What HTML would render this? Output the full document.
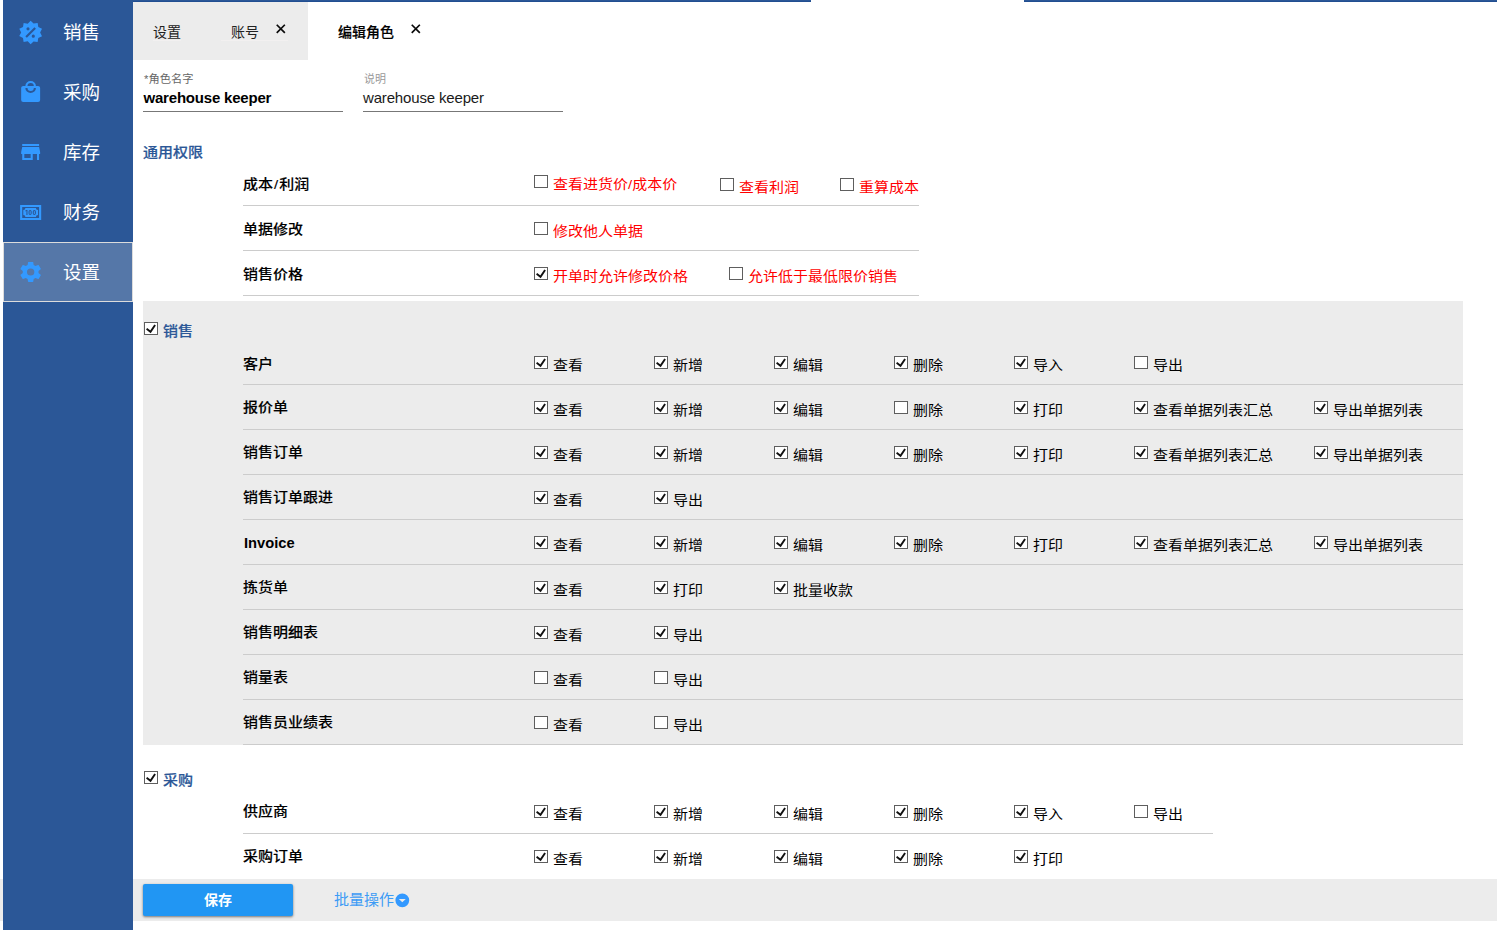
<!DOCTYPE html><html lang="zh-CN"><head><meta charset="utf-8"><title>编辑角色</title><style>
*{margin:0;padding:0;box-sizing:border-box}
html,body{width:1497px;height:930px;overflow:hidden;background:#fff}
body{position:relative;font-family:"Liberation Sans","Noto Sans CJK SC",sans-serif;font-size:15px;color:#000;line-height:20px}
.abs{position:absolute}
#side{left:3px;top:0;width:130px;height:930px;background:#2b5797}
.nav{position:absolute;left:0;width:130px;height:60px}
.nav svg{position:absolute;left:14.9px;top:18px;width:25.3px;height:24px;fill:#3399ff}
.nav span{position:absolute;left:60px;top:17.3px;font-size:18.5px;line-height:28px;color:#fff;white-space:nowrap}
.nav:first-child svg{height:25px;top:17.9px}
.nav.sel{background:#5577a8;box-shadow:inset 0 0 0 1px #dcdcdc}
.tb{background:linear-gradient(#2b5797 50%,#214e91 50%);height:2px;top:0}
#tabs{left:133px;top:2px;width:175px;height:58px;background:#ececec}
.tab{position:absolute;font-size:14px;line-height:20px;margin-top:0.5px;white-space:nowrap;color:#222}
.x{position:absolute;width:9.6px;height:9.6px}
.x svg{display:block;width:9.6px;height:9.6px}
.lbl{position:absolute;font-size:11px;line-height:14px;white-space:nowrap}
.inp{position:absolute;font-size:15px;line-height:20px;white-space:nowrap}
.ul{position:absolute;height:1px;background:#777}
.h{position:absolute;color:#2b5797;font-weight:500;-webkit-text-stroke:0.2px #2b5797;font-size:14px;line-height:20px;white-space:nowrap;transform:scale(1.0714,0.95);transform-origin:0 50%}
.panel{position:absolute;left:143px;width:1320px;background:#ececec}
.row{position:absolute;left:243px;height:45px;border-bottom:1px solid #ccc}
.rl{position:absolute;left:0.3px;top:12.4px;font-weight:500;-webkit-text-stroke:0.12px #000;font-size:14px;line-height:20px;white-space:nowrap;transform:scale(1.0714,0.95);transform-origin:0 50%}
.c{position:absolute;top:16px;height:20px;white-space:nowrap}
.c svg{position:absolute;left:0;top:0;width:14px;height:13px}
.c span{position:absolute;left:19.3px;top:-1.1px;font-size:14px;line-height:20px;transform:scale(1.0714,0.95);transform-origin:0 50%}
.red span{color:#ff0000}
.rl i{font-style:normal;margin:0 1px}
.rlb{position:absolute;left:0.7px;top:12.6px;font-weight:bold;font-size:15px;line-height:20px;white-space:nowrap;transform:scaleX(0.98);transform-origin:0 0}
.hc{position:absolute;left:144px}
.hc svg{position:absolute;left:0;top:0;width:14px;height:13px}
#bar{left:0;top:879px;width:1497px;height:42px;background:#ececec}
#save{left:143px;top:884px;width:150px;height:32px;background:#2196f3;border-radius:2px;box-shadow:0 1px 3px rgba(0,0,0,.35),0 1px 2px rgba(0,0,0,.2);color:#fff;font-weight:bold;font-size:14px;line-height:32px;text-align:center}
#batch{left:334px;top:890px;color:#3d9bf5;font-size:15px;line-height:20px;white-space:nowrap}
#batch svg{position:absolute;left:60.2px;top:1.7px;width:16.6px;height:16.6px;fill:#3399ff}
</style></head><body>
<div id="bar" class="abs"></div>
<div id="side" class="abs">
<div class="nav" style="top:2px"><svg viewBox="0 0 24 24" preserveAspectRatio="none"><path d="M18.65,2.85L19.26,6.71L22.77,8.5L21,12L22.78,15.5L19.24,17.29L18.63,21.15L14.74,20.54L11.97,23.3L9.19,20.5L5.33,21.14L4.71,17.25L1.22,15.47L3,11.97L1.23,8.5L4.74,6.69L5.35,2.86L9.22,3.5L12,0.69L14.77,3.46L18.65,2.85M9.5,7A1.5,1.5 0 0,0 8,8.5A1.5,1.5 0 0,0 9.5,10A1.5,1.5 0 0,0 11,8.5A1.5,1.5 0 0,0 9.5,7M14.5,14A1.5,1.5 0 0,0 13,15.5A1.5,1.5 0 0,0 14.5,17A1.5,1.5 0 0,0 16,15.5A1.5,1.5 0 0,0 14.5,14M8.41,17L17,8.41L15.59,7L7,15.59L8.41,17Z"/></svg><span>销售</span></div>
<div class="nav" style="top:62px"><svg viewBox="0 0 24 24" preserveAspectRatio="none"><path d="M12,13A5,5 0 0,1 7,8H9A3,3 0 0,0 12,11A3,3 0 0,0 15,8H17A5,5 0 0,1 12,13M12,3A3,3 0 0,1 15,6H9A3,3 0 0,1 12,3M19,6H17A5,5 0 0,0 12,1A5,5 0 0,0 7,6H5C3.89,6 3,6.89 3,8V20A2,2 0 0,0 5,22H19A2,2 0 0,0 21,20V8C21,6.89 20.1,6 19,6Z"/></svg><span>采购</span></div>
<div class="nav" style="top:122px"><svg viewBox="0 0 24 24" preserveAspectRatio="none"><path d="M12,18H6V14H12M21,14V12L20,7H4L3,12V14H4V20H14V14H18V20H20V14M20,4H4V6H20V4Z"/></svg><span>库存</span></div>
<div class="nav" style="top:182px"><svg viewBox="0 0 24 24" preserveAspectRatio="none"><path d="M2,5H22V20H2V5M20,18V7H4V18H20M17,8A2,2 0 0,0 19,10V15A2,2 0 0,0 17,17H7A2,2 0 0,0 5,15V10A2,2 0 0,0 7,8H17M17,13V12C17,10.9 16.33,10 15.5,10C14.67,10 14,10.9 14,12V13C14,14.1 14.67,15 15.5,15C16.33,15 17,14.1 17,13M15.5,11A0.5,0.5 0 0,1 16,11.5V13.5A0.5,0.5 0 0,1 15.5,14A0.5,0.5 0 0,1 15,13.5V11.5A0.5,0.5 0 0,1 15.5,11M13,13V12C13,10.9 12.33,10 11.5,10C10.67,10 10,10.9 10,12V13C10,14.1 10.67,15 11.5,15C12.33,15 13,14.1 13,13M11.5,11A0.5,0.5 0 0,1 12,11.5V13.5A0.5,0.5 0 0,1 11.5,14A0.5,0.5 0 0,1 11,13.5V11.5A0.5,0.5 0 0,1 11.5,11M8,15H9V10H8L7,10.5V11.5L8,11V15Z"/></svg><span>财务</span></div>
<div class="nav sel" style="top:242px"><svg viewBox="0 0 24 24" preserveAspectRatio="none"><path d="M12,15.5A3.5,3.5 0 0,1 8.5,12A3.5,3.5 0 0,1 12,8.5A3.5,3.5 0 0,1 15.5,12A3.5,3.5 0 0,1 12,15.5M19.43,12.97C19.47,12.65 19.5,12.33 19.5,12C19.5,11.67 19.47,11.34 19.43,11L21.54,9.37C21.73,9.22 21.78,8.95 21.66,8.73L19.66,5.27C19.54,5.05 19.27,4.96 19.05,5.05L16.56,6.05C16.04,5.66 15.5,5.32 14.87,5.07L14.5,2.42C14.46,2.18 14.25,2 14,2H10C9.75,2 9.54,2.18 9.5,2.42L9.13,5.07C8.5,5.32 7.96,5.66 7.44,6.05L4.95,5.05C4.73,4.96 4.46,5.05 4.34,5.27L2.34,8.73C2.21,8.95 2.27,9.22 2.46,9.37L4.57,11C4.53,11.34 4.5,11.67 4.5,12C4.5,12.33 4.53,12.65 4.57,12.97L2.46,14.63C2.27,14.78 2.21,15.05 2.34,15.27L4.34,18.73C4.46,18.95 4.73,19.03 4.95,18.95L7.44,17.94C7.96,18.34 8.5,18.68 9.13,18.93L9.5,21.58C9.54,21.82 9.75,22 10,22H14C14.25,22 14.46,21.82 14.5,21.58L14.87,18.93C15.5,18.67 16.04,18.34 16.56,17.94L19.05,18.95C19.27,19.03 19.54,18.95 19.66,18.73L21.66,15.27C21.78,15.05 21.73,14.78 21.54,14.63L19.43,12.97Z"/></svg><span>设置</span></div>
</div>
<div class="abs tb" style="left:133px;width:678px"></div>
<div class="abs tb" style="left:1024px;width:473px"></div>
<div id="tabs" class="abs"></div>
<div class="abs" style="left:153px;top:40px;width:28px;height:1px;background:#f2f0f0"></div><div class="abs" style="left:221px;top:40px;width:67px;height:1px;background:#f2f0f0"></div>
<div class="tab" style="left:153px;top:21px">设置</div>
<div class="tab" style="left:231px;top:21px">账号</div>
<div class="x" style="left:276.4px;top:24.4px"><svg viewBox="0 0 9 9"><path d="M0.7,0.7L8.3,8.3M8.3,0.7L0.7,8.3" stroke="#0a0a0a" stroke-width="1.6" fill="none"/></svg></div>
<div class="tab" style="left:338px;top:21px;font-weight:500;-webkit-text-stroke:0.15px #000;color:#000">编辑角色</div>
<div class="x" style="left:411.4px;top:24.4px"><svg viewBox="0 0 9 9"><path d="M0.7,0.7L8.3,8.3M8.3,0.7L0.7,8.3" stroke="#0a0a0a" stroke-width="1.6" fill="none"/></svg></div>
<div class="lbl" style="left:144px;top:72.1px;color:#666;font-size:11.25px">*角色名字</div>
<div class="inp" style="left:143.5px;top:87.6px;font-weight:bold;letter-spacing:-0.2px">warehouse keeper</div>
<div class="ul" style="left:143px;top:111px;width:200px"></div>
<div class="lbl" style="left:364px;top:72.1px;color:#999">说明</div>
<div class="inp" style="left:363px;top:87.7px;letter-spacing:-0.16px;color:#1a1a1a">warehouse keeper</div>
<div class="ul" style="left:363px;top:111px;width:200px"></div>
<div class="h" style="left:143px;top:142px">通用权限</div>
<div class="row red" style="top:161px;width:676px"><div class="rl" style="top:13.1px">成本<i>/</i>利润</div>
<div class="c" style="left:291px;top:14px"><svg viewBox="0 0 14 13"><rect x="0.5" y="0.5" width="13" height="12" fill="#fff" stroke="#5e5e5e"/></svg><span>查看进货价/成本价</span></div>
<div class="c" style="left:477px;top:17px"><svg viewBox="0 0 14 13"><rect x="0.5" y="0.5" width="13" height="12" fill="#fff" stroke="#5e5e5e"/></svg><span>查看利润</span></div>
<div class="c" style="left:597px;top:17px"><svg viewBox="0 0 14 13"><rect x="0.5" y="0.5" width="13" height="12" fill="#fff" stroke="#5e5e5e"/></svg><span>重算成本</span></div>
</div>
<div class="row red" style="top:206px;width:676px"><div class="rl" style="top:13.1px">单据修改</div>
<div class="c" style="left:291px;top:16px"><svg viewBox="0 0 14 13"><rect x="0.5" y="0.5" width="13" height="12" fill="#fff" stroke="#5e5e5e"/></svg><span>修改他人单据</span></div>
</div>
<div class="row red" style="top:251px;width:676px"><div class="rl" style="top:13.1px">销售价格</div>
<div class="c" style="left:291px;top:16px"><svg viewBox="0 0 14 13"><rect x="0.5" y="0.5" width="13" height="12" fill="#fff" stroke="#5e5e5e"/><polyline points="2.6,6.8 6.5,9.8 11.1,3" fill="none" stroke="#111" stroke-width="1.9"/></svg><span>开单时允许修改价格</span></div>
<div class="c" style="left:486px;top:16px"><svg viewBox="0 0 14 13"><rect x="0.5" y="0.5" width="13" height="12" fill="#fff" stroke="#5e5e5e"/></svg><span>允许低于最低限价销售</span></div>
</div>
<div class="panel" style="top:301px;height:444px"></div>
<div class="hc" style="top:322px"><svg viewBox="0 0 14 13"><rect x="0.5" y="0.5" width="13" height="12" fill="#fff" stroke="#5e5e5e"/><polyline points="2.6,6.8 6.5,9.8 11.1,3" fill="none" stroke="#111" stroke-width="1.9"/></svg></div>
<div class="h" style="left:163.3px;top:321px">销售</div>
<div class="row" style="top:340px;width:1220px"><div class="rl" style="top:13.8px">客户</div>
<div class="c" style="left:291px"><svg viewBox="0 0 14 13"><rect x="0.5" y="0.5" width="13" height="12" fill="#fff" stroke="#5e5e5e"/><polyline points="2.6,6.8 6.5,9.8 11.1,3" fill="none" stroke="#111" stroke-width="1.9"/></svg><span>查看</span></div>
<div class="c" style="left:411px"><svg viewBox="0 0 14 13"><rect x="0.5" y="0.5" width="13" height="12" fill="#fff" stroke="#5e5e5e"/><polyline points="2.6,6.8 6.5,9.8 11.1,3" fill="none" stroke="#111" stroke-width="1.9"/></svg><span>新增</span></div>
<div class="c" style="left:531px"><svg viewBox="0 0 14 13"><rect x="0.5" y="0.5" width="13" height="12" fill="#fff" stroke="#5e5e5e"/><polyline points="2.6,6.8 6.5,9.8 11.1,3" fill="none" stroke="#111" stroke-width="1.9"/></svg><span>编辑</span></div>
<div class="c" style="left:651px"><svg viewBox="0 0 14 13"><rect x="0.5" y="0.5" width="13" height="12" fill="#fff" stroke="#5e5e5e"/><polyline points="2.6,6.8 6.5,9.8 11.1,3" fill="none" stroke="#111" stroke-width="1.9"/></svg><span>删除</span></div>
<div class="c" style="left:771px"><svg viewBox="0 0 14 13"><rect x="0.5" y="0.5" width="13" height="12" fill="#fff" stroke="#5e5e5e"/><polyline points="2.6,6.8 6.5,9.8 11.1,3" fill="none" stroke="#111" stroke-width="1.9"/></svg><span>导入</span></div>
<div class="c" style="left:891px"><svg viewBox="0 0 14 13"><rect x="0.5" y="0.5" width="13" height="12" fill="#fff" stroke="#5e5e5e"/></svg><span>导出</span></div>
</div>
<div class="row" style="top:385px;width:1220px"><div class="rl">报价单</div>
<div class="c" style="left:291px"><svg viewBox="0 0 14 13"><rect x="0.5" y="0.5" width="13" height="12" fill="#fff" stroke="#5e5e5e"/><polyline points="2.6,6.8 6.5,9.8 11.1,3" fill="none" stroke="#111" stroke-width="1.9"/></svg><span>查看</span></div>
<div class="c" style="left:411px"><svg viewBox="0 0 14 13"><rect x="0.5" y="0.5" width="13" height="12" fill="#fff" stroke="#5e5e5e"/><polyline points="2.6,6.8 6.5,9.8 11.1,3" fill="none" stroke="#111" stroke-width="1.9"/></svg><span>新增</span></div>
<div class="c" style="left:531px"><svg viewBox="0 0 14 13"><rect x="0.5" y="0.5" width="13" height="12" fill="#fff" stroke="#5e5e5e"/><polyline points="2.6,6.8 6.5,9.8 11.1,3" fill="none" stroke="#111" stroke-width="1.9"/></svg><span>编辑</span></div>
<div class="c" style="left:651px"><svg viewBox="0 0 14 13"><rect x="0.5" y="0.5" width="13" height="12" fill="#fff" stroke="#5e5e5e"/></svg><span>删除</span></div>
<div class="c" style="left:771px"><svg viewBox="0 0 14 13"><rect x="0.5" y="0.5" width="13" height="12" fill="#fff" stroke="#5e5e5e"/><polyline points="2.6,6.8 6.5,9.8 11.1,3" fill="none" stroke="#111" stroke-width="1.9"/></svg><span>打印</span></div>
<div class="c" style="left:891px"><svg viewBox="0 0 14 13"><rect x="0.5" y="0.5" width="13" height="12" fill="#fff" stroke="#5e5e5e"/><polyline points="2.6,6.8 6.5,9.8 11.1,3" fill="none" stroke="#111" stroke-width="1.9"/></svg><span>查看单据列表汇总</span></div>
<div class="c" style="left:1071px"><svg viewBox="0 0 14 13"><rect x="0.5" y="0.5" width="13" height="12" fill="#fff" stroke="#5e5e5e"/><polyline points="2.6,6.8 6.5,9.8 11.1,3" fill="none" stroke="#111" stroke-width="1.9"/></svg><span>导出单据列表</span></div>
</div>
<div class="row" style="top:430px;width:1220px"><div class="rl">销售订单</div>
<div class="c" style="left:291px"><svg viewBox="0 0 14 13"><rect x="0.5" y="0.5" width="13" height="12" fill="#fff" stroke="#5e5e5e"/><polyline points="2.6,6.8 6.5,9.8 11.1,3" fill="none" stroke="#111" stroke-width="1.9"/></svg><span>查看</span></div>
<div class="c" style="left:411px"><svg viewBox="0 0 14 13"><rect x="0.5" y="0.5" width="13" height="12" fill="#fff" stroke="#5e5e5e"/><polyline points="2.6,6.8 6.5,9.8 11.1,3" fill="none" stroke="#111" stroke-width="1.9"/></svg><span>新增</span></div>
<div class="c" style="left:531px"><svg viewBox="0 0 14 13"><rect x="0.5" y="0.5" width="13" height="12" fill="#fff" stroke="#5e5e5e"/><polyline points="2.6,6.8 6.5,9.8 11.1,3" fill="none" stroke="#111" stroke-width="1.9"/></svg><span>编辑</span></div>
<div class="c" style="left:651px"><svg viewBox="0 0 14 13"><rect x="0.5" y="0.5" width="13" height="12" fill="#fff" stroke="#5e5e5e"/><polyline points="2.6,6.8 6.5,9.8 11.1,3" fill="none" stroke="#111" stroke-width="1.9"/></svg><span>删除</span></div>
<div class="c" style="left:771px"><svg viewBox="0 0 14 13"><rect x="0.5" y="0.5" width="13" height="12" fill="#fff" stroke="#5e5e5e"/><polyline points="2.6,6.8 6.5,9.8 11.1,3" fill="none" stroke="#111" stroke-width="1.9"/></svg><span>打印</span></div>
<div class="c" style="left:891px"><svg viewBox="0 0 14 13"><rect x="0.5" y="0.5" width="13" height="12" fill="#fff" stroke="#5e5e5e"/><polyline points="2.6,6.8 6.5,9.8 11.1,3" fill="none" stroke="#111" stroke-width="1.9"/></svg><span>查看单据列表汇总</span></div>
<div class="c" style="left:1071px"><svg viewBox="0 0 14 13"><rect x="0.5" y="0.5" width="13" height="12" fill="#fff" stroke="#5e5e5e"/><polyline points="2.6,6.8 6.5,9.8 11.1,3" fill="none" stroke="#111" stroke-width="1.9"/></svg><span>导出单据列表</span></div>
</div>
<div class="row" style="top:475px;width:1220px"><div class="rl">销售订单跟进</div>
<div class="c" style="left:291px"><svg viewBox="0 0 14 13"><rect x="0.5" y="0.5" width="13" height="12" fill="#fff" stroke="#5e5e5e"/><polyline points="2.6,6.8 6.5,9.8 11.1,3" fill="none" stroke="#111" stroke-width="1.9"/></svg><span>查看</span></div>
<div class="c" style="left:411px"><svg viewBox="0 0 14 13"><rect x="0.5" y="0.5" width="13" height="12" fill="#fff" stroke="#5e5e5e"/><polyline points="2.6,6.8 6.5,9.8 11.1,3" fill="none" stroke="#111" stroke-width="1.9"/></svg><span>导出</span></div>
</div>
<div class="row" style="top:520px;width:1220px"><div class="rlb">Invoice</div>
<div class="c" style="left:291px"><svg viewBox="0 0 14 13"><rect x="0.5" y="0.5" width="13" height="12" fill="#fff" stroke="#5e5e5e"/><polyline points="2.6,6.8 6.5,9.8 11.1,3" fill="none" stroke="#111" stroke-width="1.9"/></svg><span>查看</span></div>
<div class="c" style="left:411px"><svg viewBox="0 0 14 13"><rect x="0.5" y="0.5" width="13" height="12" fill="#fff" stroke="#5e5e5e"/><polyline points="2.6,6.8 6.5,9.8 11.1,3" fill="none" stroke="#111" stroke-width="1.9"/></svg><span>新增</span></div>
<div class="c" style="left:531px"><svg viewBox="0 0 14 13"><rect x="0.5" y="0.5" width="13" height="12" fill="#fff" stroke="#5e5e5e"/><polyline points="2.6,6.8 6.5,9.8 11.1,3" fill="none" stroke="#111" stroke-width="1.9"/></svg><span>编辑</span></div>
<div class="c" style="left:651px"><svg viewBox="0 0 14 13"><rect x="0.5" y="0.5" width="13" height="12" fill="#fff" stroke="#5e5e5e"/><polyline points="2.6,6.8 6.5,9.8 11.1,3" fill="none" stroke="#111" stroke-width="1.9"/></svg><span>删除</span></div>
<div class="c" style="left:771px"><svg viewBox="0 0 14 13"><rect x="0.5" y="0.5" width="13" height="12" fill="#fff" stroke="#5e5e5e"/><polyline points="2.6,6.8 6.5,9.8 11.1,3" fill="none" stroke="#111" stroke-width="1.9"/></svg><span>打印</span></div>
<div class="c" style="left:891px"><svg viewBox="0 0 14 13"><rect x="0.5" y="0.5" width="13" height="12" fill="#fff" stroke="#5e5e5e"/><polyline points="2.6,6.8 6.5,9.8 11.1,3" fill="none" stroke="#111" stroke-width="1.9"/></svg><span>查看单据列表汇总</span></div>
<div class="c" style="left:1071px"><svg viewBox="0 0 14 13"><rect x="0.5" y="0.5" width="13" height="12" fill="#fff" stroke="#5e5e5e"/><polyline points="2.6,6.8 6.5,9.8 11.1,3" fill="none" stroke="#111" stroke-width="1.9"/></svg><span>导出单据列表</span></div>
</div>
<div class="row" style="top:565px;width:1220px"><div class="rl" style="-webkit-text-stroke:0">拣货单</div>
<div class="c" style="left:291px"><svg viewBox="0 0 14 13"><rect x="0.5" y="0.5" width="13" height="12" fill="#fff" stroke="#5e5e5e"/><polyline points="2.6,6.8 6.5,9.8 11.1,3" fill="none" stroke="#111" stroke-width="1.9"/></svg><span>查看</span></div>
<div class="c" style="left:411px"><svg viewBox="0 0 14 13"><rect x="0.5" y="0.5" width="13" height="12" fill="#fff" stroke="#5e5e5e"/><polyline points="2.6,6.8 6.5,9.8 11.1,3" fill="none" stroke="#111" stroke-width="1.9"/></svg><span>打印</span></div>
<div class="c" style="left:531px"><svg viewBox="0 0 14 13"><rect x="0.5" y="0.5" width="13" height="12" fill="#fff" stroke="#5e5e5e"/><polyline points="2.6,6.8 6.5,9.8 11.1,3" fill="none" stroke="#111" stroke-width="1.9"/></svg><span>批量收款</span></div>
</div>
<div class="row" style="top:610px;width:1220px"><div class="rl">销售明细表</div>
<div class="c" style="left:291px"><svg viewBox="0 0 14 13"><rect x="0.5" y="0.5" width="13" height="12" fill="#fff" stroke="#5e5e5e"/><polyline points="2.6,6.8 6.5,9.8 11.1,3" fill="none" stroke="#111" stroke-width="1.9"/></svg><span>查看</span></div>
<div class="c" style="left:411px"><svg viewBox="0 0 14 13"><rect x="0.5" y="0.5" width="13" height="12" fill="#fff" stroke="#5e5e5e"/><polyline points="2.6,6.8 6.5,9.8 11.1,3" fill="none" stroke="#111" stroke-width="1.9"/></svg><span>导出</span></div>
</div>
<div class="row" style="top:655px;width:1220px"><div class="rl">销量表</div>
<div class="c" style="left:291px"><svg viewBox="0 0 14 13"><rect x="0.5" y="0.5" width="13" height="12" fill="#fff" stroke="#5e5e5e"/></svg><span>查看</span></div>
<div class="c" style="left:411px"><svg viewBox="0 0 14 13"><rect x="0.5" y="0.5" width="13" height="12" fill="#fff" stroke="#5e5e5e"/></svg><span>导出</span></div>
</div>
<div class="row" style="top:700px;width:1220px"><div class="rl">销售员业绩表</div>
<div class="c" style="left:291px"><svg viewBox="0 0 14 13"><rect x="0.5" y="0.5" width="13" height="12" fill="#fff" stroke="#5e5e5e"/></svg><span>查看</span></div>
<div class="c" style="left:411px"><svg viewBox="0 0 14 13"><rect x="0.5" y="0.5" width="13" height="12" fill="#fff" stroke="#5e5e5e"/></svg><span>导出</span></div>
</div>
<div class="hc" style="top:771px"><svg viewBox="0 0 14 13"><rect x="0.5" y="0.5" width="13" height="12" fill="#fff" stroke="#5e5e5e"/><polyline points="2.6,6.8 6.5,9.8 11.1,3" fill="none" stroke="#111" stroke-width="1.9"/></svg></div>
<div class="h" style="left:163.3px;top:770px">采购</div>
<div class="row" style="top:789px;width:970px"><div class="rl">供应商</div>
<div class="c" style="left:291px"><svg viewBox="0 0 14 13"><rect x="0.5" y="0.5" width="13" height="12" fill="#fff" stroke="#5e5e5e"/><polyline points="2.6,6.8 6.5,9.8 11.1,3" fill="none" stroke="#111" stroke-width="1.9"/></svg><span>查看</span></div>
<div class="c" style="left:411px"><svg viewBox="0 0 14 13"><rect x="0.5" y="0.5" width="13" height="12" fill="#fff" stroke="#5e5e5e"/><polyline points="2.6,6.8 6.5,9.8 11.1,3" fill="none" stroke="#111" stroke-width="1.9"/></svg><span>新增</span></div>
<div class="c" style="left:531px"><svg viewBox="0 0 14 13"><rect x="0.5" y="0.5" width="13" height="12" fill="#fff" stroke="#5e5e5e"/><polyline points="2.6,6.8 6.5,9.8 11.1,3" fill="none" stroke="#111" stroke-width="1.9"/></svg><span>编辑</span></div>
<div class="c" style="left:651px"><svg viewBox="0 0 14 13"><rect x="0.5" y="0.5" width="13" height="12" fill="#fff" stroke="#5e5e5e"/><polyline points="2.6,6.8 6.5,9.8 11.1,3" fill="none" stroke="#111" stroke-width="1.9"/></svg><span>删除</span></div>
<div class="c" style="left:771px"><svg viewBox="0 0 14 13"><rect x="0.5" y="0.5" width="13" height="12" fill="#fff" stroke="#5e5e5e"/><polyline points="2.6,6.8 6.5,9.8 11.1,3" fill="none" stroke="#111" stroke-width="1.9"/></svg><span>导入</span></div>
<div class="c" style="left:891px"><svg viewBox="0 0 14 13"><rect x="0.5" y="0.5" width="13" height="12" fill="#fff" stroke="#5e5e5e"/></svg><span>导出</span></div>
</div>
<div class="row" style="top:834px;width:970px;border-bottom-color:transparent"><div class="rl">采购订单</div>
<div class="c" style="left:291px"><svg viewBox="0 0 14 13"><rect x="0.5" y="0.5" width="13" height="12" fill="#fff" stroke="#5e5e5e"/><polyline points="2.6,6.8 6.5,9.8 11.1,3" fill="none" stroke="#111" stroke-width="1.9"/></svg><span>查看</span></div>
<div class="c" style="left:411px"><svg viewBox="0 0 14 13"><rect x="0.5" y="0.5" width="13" height="12" fill="#fff" stroke="#5e5e5e"/><polyline points="2.6,6.8 6.5,9.8 11.1,3" fill="none" stroke="#111" stroke-width="1.9"/></svg><span>新增</span></div>
<div class="c" style="left:531px"><svg viewBox="0 0 14 13"><rect x="0.5" y="0.5" width="13" height="12" fill="#fff" stroke="#5e5e5e"/><polyline points="2.6,6.8 6.5,9.8 11.1,3" fill="none" stroke="#111" stroke-width="1.9"/></svg><span>编辑</span></div>
<div class="c" style="left:651px"><svg viewBox="0 0 14 13"><rect x="0.5" y="0.5" width="13" height="12" fill="#fff" stroke="#5e5e5e"/><polyline points="2.6,6.8 6.5,9.8 11.1,3" fill="none" stroke="#111" stroke-width="1.9"/></svg><span>删除</span></div>
<div class="c" style="left:771px"><svg viewBox="0 0 14 13"><rect x="0.5" y="0.5" width="13" height="12" fill="#fff" stroke="#5e5e5e"/><polyline points="2.6,6.8 6.5,9.8 11.1,3" fill="none" stroke="#111" stroke-width="1.9"/></svg><span>打印</span></div>
</div>
<div class="abs" style="left:133px;top:879px;width:1364px;height:42px;background:#ececec"></div>
<div class="abs" style="left:133px;top:921px;width:1364px;height:9px;background:#fff"></div>
<div id="save" class="abs">保存</div>
<div id="batch" class="abs">批量操作<svg viewBox="0 0 24 24" preserveAspectRatio="none"><path d="M12,2A10,10 0 0,1 22,12A10,10 0 0,1 12,22A10,10 0 0,1 2,12A10,10 0 0,1 12,2M7,10L12,15L17,10H7Z"/></svg></div>
</body></html>
